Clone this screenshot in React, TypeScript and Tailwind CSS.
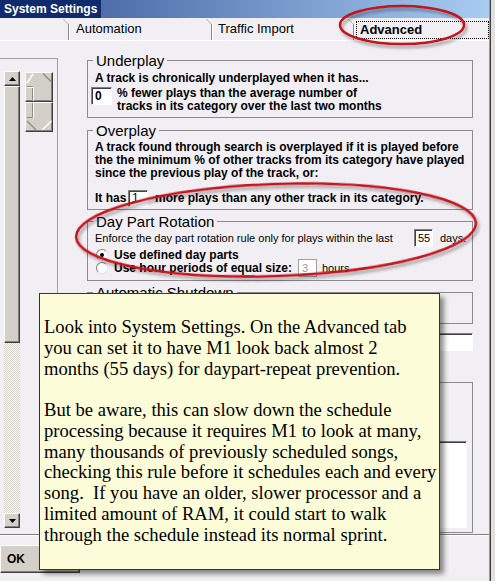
import React from "react";

const SANS = "font-['Liberation_Sans',Arial,sans-serif]";
const SERIF = "font-['Liberation_Serif','Times_New_Roman',serif]";

function TabEdge() {
  return (
    <svg width="8" height="22" className="shrink-0">
      <path d="M0.5 1 L5.5 6 V22" stroke="#8a8a8a" fill="none" />
      <path d="M1.5 1 L6.5 6 V22" stroke="#ffffff" fill="none" />
    </svg>
  );
}

function Group({ title, className = "", children }: { title?: string; className?: string; children?: React.ReactNode }) {
  return (
    <div className={`border border-[#8c8a8f] ${className}`}>
      {title && (
        <div className="-mt-[9px] ml-[5px] w-fit bg-[#f1eff3] px-[3px] text-[15px] leading-[17px] font-normal">{title}</div>
      )}
      {children}
    </div>
  );
}

function Field({ value, className = "" }: { value: string; className?: string }) {
  return (
    <div
      className={`flex items-center bg-white border border-t-[#808080] border-l-[#808080] border-b-white border-r-white shadow-[inset_1px_1px_0_#404040] pl-[3px] ${className}`}
    >
      {value}
    </div>
  );
}

function Radio({ checked }: { checked?: boolean }) {
  return (
    <div className="w-[12px] h-[12px] rounded-full bg-white border border-t-[#808080] border-l-[#808080] border-b-[#e6e6e6] border-r-[#e6e6e6] flex items-center justify-center shrink-0">
      {checked && <div className="w-[4px] h-[4px] rounded-full bg-black" />}
    </div>
  );
}

const raised =
  "bg-[#d4d0c8] border border-t-white border-l-white border-b-[#404040] border-r-[#404040] shadow-[inset_-1px_-1px_0_#808080]";

function ScrollButton({ down }: { down?: boolean }) {
  return (
    <div className={`h-[15px] flex items-center justify-center ${raised}`}>
      <svg width="7" height="4">
        <path d={down ? "M0 0 H7 L3.5 4 Z" : "M0 4 H7 L3.5 0 Z"} fill="#000" />
      </svg>
    </div>
  );
}

function SpinUp() {
  return (
    <div className={`h-[30px] ${raised}`}>
      <svg width="26" height="28">
        <path d="M1 10 L7 1" stroke="#fff" strokeWidth="1.5" fill="none" />
        <path d="M17 0.5 L25.5 9" stroke="#8a8a8a" strokeWidth="1.2" fill="none" />
        <path d="M1 13.5 H6.5 V28" stroke="#8a8a8a" fill="none" />
        <path d="M1 14.5 H7.5 V28" stroke="#fff" fill="none" />
      </svg>
    </div>
  );
}

function SpinDown() {
  return (
    <div className={`h-[30px] ${raised}`}>
      <svg width="26" height="28">
        <path d="M6.5 0 V14.5 H1" stroke="#8a8a8a" fill="none" />
        <path d="M7.5 0 V15.5" stroke="#fff" fill="none" />
        <path d="M1 18 L10 27" stroke="#8a8a8a" strokeWidth="1.2" fill="none" />
        <path d="M16 27 L25.5 18" stroke="#fff" strokeWidth="1.5" fill="none" />
      </svg>
    </div>
  );
}

export default function App() {
  return (
    <div className={`relative w-[495px] h-[581px] overflow-hidden flex bg-[#d4d0c8] text-black ${SANS}`}>
      <div className="w-[489px] flex flex-col bg-[#f1eff3]">
        {/* title bar */}
        <div className="h-[18px] flex">
          <div className="w-[101px] bg-[#0f2a6d] pl-[4px] text-[12px] font-bold leading-[18px] text-white">System Settings</div>
          <div className="flex-1 bg-gradient-to-r from-[#4e6da9] to-[#a9ccf1]" />
        </div>

        {/* tabs */}
        <div className="h-[22px] flex items-stretch text-[13px]">
          <div className="w-[63px]" />
          <TabEdge />
          <div className="w-[135px] flex items-center pl-[5px]">Automation</div>
          <TabEdge />
          <div className="w-[134px] flex items-center pl-[4px]">Traffic Import</div>
          <TabEdge />
          <div className="flex-1 mt-[3px] mb-[1px] border border-dotted border-black flex items-center pl-[3px] font-bold">
            Advanced
          </div>
        </div>
        <div className="h-[1px] bg-white" />

        {/* body */}
        <div className="h-[493px] flex items-stretch">
          <div className="mt-[17px] w-[58px] border-t border-r border-[#a3a1a6] flex items-start">
            <div className="ml-[4px] mt-[12px] mb-[6px] w-[16px] self-stretch flex flex-col">
              <ScrollButton />
              <div className={`h-[257px] ${raised}`} />
              <div className="flex-1 bg-[image:repeating-conic-gradient(#d4d0c8_0_25%,#ffffff_0_50%)] bg-[length:2px_2px]" />
              <ScrollButton down />
            </div>
            <div className="ml-[5px] mt-[13px] w-[28px] flex flex-col">
              <SpinUp />
              <SpinDown />
            </div>
          </div>

          <div className="ml-[29px] w-[386px] flex flex-col text-[12px] leading-[13px] font-bold">
            <Group title="Underplay" className="mt-[19px] h-[58px]">
              <div className="mt-[3px] pl-[7px]">A track is chronically underplayed when it has...</div>
              <div className="mt-[2px] flex items-start">
                <Field value="0" className="ml-[3px] w-[21px] h-[18px]" />
                <div className="ml-[5px]">
                  <div>% fewer plays than the average number of</div>
                  <div>tracks in its category over the last two months</div>
                </div>
              </div>
            </Group>

            <Group title="Overplay" className="mt-[12px] h-[80px]">
              <div className="mt-[2px] pl-[7px]">
                <div>A track found through search is overplayed if it is played before</div>
                <div>the the minimum % of other tracks from its category have played</div>
                <div>since the previous play of the track, or:</div>
              </div>
              <div className="mt-[10px] pl-[7px] flex items-center">
                <span className="w-[33px]">It has</span>
                <Field value="1" className="w-[20px] h-[17px] font-normal" />
                <span className="ml-[7px]">more plays than any other track in its category.</span>
              </div>
            </Group>

            <Group title="Day Part Rotation" className="mt-[11px] h-[60px]">
              <div className="-mt-[1px] h-[18px] flex items-center text-[11px] font-normal">
                <span className="w-[326px] pl-[7px]">Enforce the day part rotation rule only for plays within the last</span>
                <Field value="55" className="w-[19px] h-[18px]" />
                <span className="ml-[7px]">days.</span>
              </div>
              <div className="mt-[2px] h-[12px] flex items-center pl-[8px]">
                <Radio checked />
                <span className="ml-[6px]">Use defined day parts</span>
              </div>
              <div className="-mt-[2px] h-[18px] flex items-center pl-[8px]">
                <Radio />
                <span className="ml-[6px] w-[184px]">Use hour periods of equal size:</span>
                <div className="w-[19px] h-[18px] bg-white border border-[#a0a0a0] pl-[3px] text-[11px] font-normal text-[#9a9a9a] flex items-center">
                  3
                </div>
                <span className="ml-[5px] text-[11px] font-normal">hours</span>
              </div>
            </Group>

            <Group title="Automatic Shutdown" className="mt-[11px] h-[32px]" />
            <Field value="" className="mt-[9px] h-[18px]" />
            <Group className="mt-[31px] h-[151px] flex flex-col justify-end">
              <Field value="" className="ml-[8px] mr-[5px] mb-[4px] h-[87px]" />
            </Group>
          </div>
        </div>

        {/* bottom */}
        <div className="h-[1px] bg-[#808080]" />
        <div className="flex-1 border-t border-white">
          <div className={`mt-[9px] w-[80px] h-[28px] flex items-center pl-[6px] text-[12px] font-bold ${raised}`}>OK</div>
        </div>
      </div>
      <div className="w-[1px] bg-[#9a9a9a]" />
      <div className="w-[1px] bg-[#404040]" />
      <div className="flex-1 bg-[#e2e0dc]" />

      {/* sticky note */}
      <div
        className={`absolute left-[39px] top-[293px] w-[401px] h-[277px] bg-[#fcfdd8] border border-[#1c3a5c] shadow-[4px_4px_5px_rgba(0,0,0,0.45)] pl-[4px] pt-[23px] text-[18.6px] leading-[20.75px] ${SERIF}`}
      >
        <div className="whitespace-pre">Look into System Settings. On the Advanced tab</div>
        <div className="whitespace-pre">you can set it to have M1 look back almost 2</div>
        <div className="whitespace-pre">months (55 days) for daypart-repeat prevention.</div>
        <div className="mt-[20.75px] whitespace-pre">But be aware, this can slow down the schedule</div>
        <div className="whitespace-pre">processing because it requires M1 to look at many,</div>
        <div className="whitespace-pre">many thousands of previously scheduled songs,</div>
        <div className="whitespace-pre">checking this rule before it schedules each and every</div>
        <div className="whitespace-pre">song.  If you have an older, slower processor and a</div>
        <div className="whitespace-pre">limited amount of RAM, it could start to walk</div>
        <div className="whitespace-pre">through the schedule instead its normal sprint.</div>
      </div>

      {/* red annotation ellipses */}
      <svg className="absolute left-0 top-0 pointer-events-none" width="495" height="581">
        <defs>
          <filter id="sh" x="-10%" y="-30%" width="120%" height="160%">
            <feDropShadow dx="2" dy="3" stdDeviation="1.6" floodColor="#000" floodOpacity="0.35" />
          </filter>
        </defs>
        <ellipse cx="402" cy="25" rx="62" ry="19" fill="none" stroke="#c2121e" strokeWidth="2.5" filter="url(#sh)" />
        <ellipse
          cx="276"
          cy="230"
          rx="200"
          ry="46"
          transform="rotate(-2 276 230)"
          fill="none"
          stroke="#c2121e"
          strokeWidth="2.5"
          filter="url(#sh)"
        />
      </svg>
    </div>
  );
}
